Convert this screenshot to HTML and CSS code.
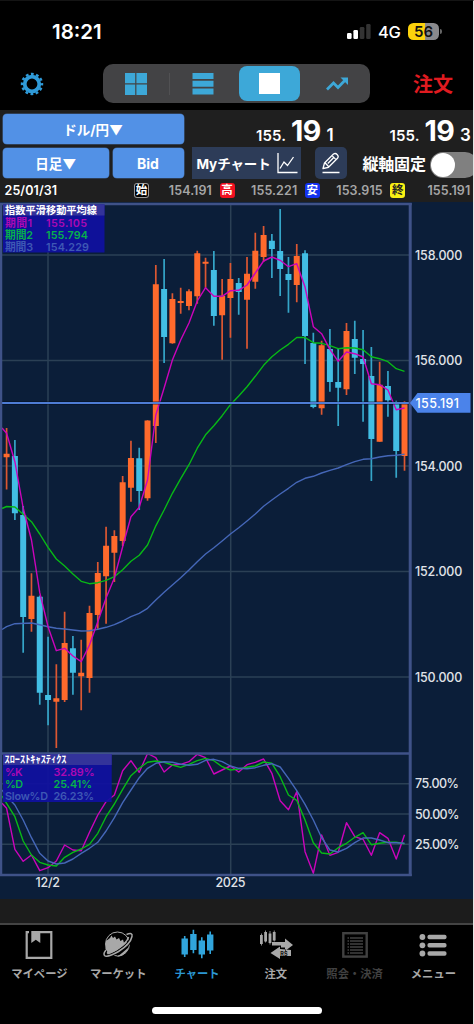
FILE: index.html
```html
<!DOCTYPE html>
<html lang="ja">
<head>
<meta charset="utf-8">
<title>チャート</title>
<link rel="stylesheet" href="styles.css">
</head>
<body>
<div class="app">
  <header class="status">
    <span class="clock">18:21</span>
    <div class="status-right">
      <svg class="signal" width="24" height="16" viewBox="0 0 24 16"><rect x="0" y="9" width="4.6" height="6" rx="1.3" fill="#fff"/><rect x="6.4" y="6" width="4.6" height="9" rx="1.3" fill="#fff"/><rect x="12.8" y="3" width="4.6" height="12" rx="1.3" fill="#333"/><rect x="19.2" y="0" width="4.4" height="15" rx="1.3" fill="#333"/></svg>
      <span class="net">4G</span>
      <span class="battery">56</span>
      <span class="battery-tip"></span>
    </div>
  </header>

  <nav class="topbar">
    <svg class="gear" width="24" height="24" viewBox="-12 -12 24 24">
      <circle r="7.300" fill="none" stroke="#2f9ad8" stroke-width="3.800"/>
      <circle r="10" fill="none" stroke="#2f9ad8" stroke-width="2.400" stroke-dasharray="2.800 2.436" stroke-dashoffset="1.400"/>
    </svg>
    <div class="segments">
      <span class="seg"><svg width="22" height="22" viewBox="0 0 22 22" fill="#3da8d8"><path d="M0 0h10.2v10.2H0zM11.4 0H22v10.2H11.4zM0 11.4h10.2V22H0zM11.4 11.4H22V22H11.4z"/></svg></span>
      <i class="divider"></i>
      <span class="seg"><svg width="22" height="22" viewBox="0 0 22 22" fill="#3da8d8"><path d="M.5 0h21v6H.5zM.5 7.8h21v6H.5zM.5 15.6h21v6H.5z"/></svg></span>
      <span class="seg seg-on"><i class="square"></i></span>
      <span class="seg"><svg width="24" height="16" viewBox="0 0 24 16"><path d="M2 13.5 8.5 7l4.5 4.5L20 4.200" fill="none" stroke="#3da8d8" stroke-width="2.7"/><path d="M15.500 1.500H23V9z" fill="#3da8d8"/></svg></span>
    </div>
    <span class="order">注文</span>
  </nav>

  <section class="controls">
    <div class="row row-pair">
      <button class="btn pair">ドル/円▼</button>
      <div class="price bid"><span class="p-int">155.</span><span class="p-big">19</span><span class="p-sub">1</span></div>
      <div class="price ask"><span class="p-int">155.</span><span class="p-big">19</span><span class="p-sub">3</span></div>
    </div>
    <div class="row row-tools">
      <button class="btn period">日足▼</button>
      <button class="btn side">Bid</button>
      <div class="mychart"><span>Myチャート</span><svg width="21" height="21" viewBox="0 0 21 21" fill="none" stroke="#fff" stroke-width="1.300"><path d="M1 0v19.500h19.500"/><path d="M3 15.500 7 9l3.500 3.500L16.500 4"/></svg></div>
      <div class="pencil"><svg width="20" height="22" viewBox="0 0 20 22" fill="none" stroke="#fff" stroke-width="1.300" stroke-linejoin="round"><path d="M2 16.500 3.500 11 12.500 2Q14.500.8 16.300 2.700 18 4.500 16.500 6.300L7.500 15.300zM11 3.600l4 4M4 10.800l3.700 4M6.800 11.500 12.500 5.800"/><path d="M1.500 20.500h17" stroke-width="1.500"/></svg></div>
      <span class="fix">縦軸固定</span>
      <span class="toggle"><i class="knob"></i></span>
    </div>
    <div class="ohlc">
      <span class="date">25/01/31</span>
      <span class="tag tag-open">始</span><span class="val">154.191</span>
      <span class="tag tag-high">高</span><span class="val">155.221</span>
      <span class="tag tag-low">安</span><span class="val">153.915</span>
      <span class="tag tag-close">終</span><span class="val">155.191</span>
    </div>
  </section>

  <svg class="chart" width="473" height="697" viewBox="0 202 473 697">
    <g class="grid">
      <path d="M48 204V875M230.700 204V875"/>
      <path d="M2 255H410M2 360.600H410M2 466H410M2 571.500H410M2 677H410M2 783.700H410M2 814H410M2 844.300H410"/>
    </g>
    <!-- x is the candle index; one unit is one trading day -->
    <g class="series" transform="translate(6.600 0) scale(8.290 1)">
      <path class="wick up" d="M0 428V489.500M3 573.300V631.700M6 664.300V748M7 611.700V702M9 639.700V710.300M10 605.700V692.700M11 562V628.700M12 526.700V623.700M13 530.300V582M14 476V546M15 440.700V501.700M17 420.300V500.700M18 265V443M20 293.300V343.700M21 287.700V313.700M22 289.300V310.300M23 250.700V303.700M24 257.700V287.700M26 279V359.700M27 263V337.700M29 257V348.700M30 232.700V288.700M31 226V262M35 244V302.300M38 340.700V414.700M41 323V395M45 361.700V441.700M48 401V470.700"/>
      <path class="wick down" d="M1 440V520M2 506V652.700M4 595.500V704.700M5 636.700V725.300M8 636V694.700M16 447.700V510M19 259V363M25 251V325.700M28 278V314.700M32 234V278M33 209V296M34 257V312.700M36 250.300V364M37 332.700V408.300M39 329V391.700M40 349V426M42 320.700V374M43 330V421.700M44 347V481M46 371V416.700M47 400.700V477.700"/>
      <path class="body up" d="M0 453.700V457.300M3 595.700V619M6 698.300V701.700M7 643V700M9 672.700V676.300M10 613V678M11 573V615M12 545.700V576.300M13 536V552.700M14 482.300V541M15 458V487.700M17 420.600V498.300M18 284.300V426M20 299V343.300M21 301V303M22 291.300V306M23 253.300V296.300M24 261.700V263.700M26 295.700V315.300M27 279V298M29 273.700V299.700M30 250.700V281.700M31 235V257M35 256V285M38 345.300V408.300M41 331V389.300M45 384.700V441.700M48 403V456"/>
      <path class="body down" d="M1 456V513.300M2 515V617M4 596.700V692.700M5 695V700M8 648.300V672.700M16 458.300V491M19 289V337M25 270V316M28 283V292M32 240.700V249M33 251V269M34 274V280M36 253.300V336M37 343V407M39 349V382M40 382V387.700M42 339V357.700M43 359V364M44 376V439M46 386V400.300M47 402.700V451"/>
      <polyline class="line slow" points="-.55,629.5 0,626.7 1,623.7 3,623 4,624.7 5,626.7 6,628.3 7,629 9,631 10,630.7 11,629.3 12,627.3 13,624.7 14,621 15,616.7 16,613.3 17,608.3 18,600 19,592.3 20,585 21,577.7 22,570 23,561.7 24,554 25,547.7 26,541 27,534 28,527.7 29,521 30,514 31,506.3 32,500 33,494 34,488.3 35,482.3 36,478.3 37,476.3 38,473 39,470.3 40,468 41,464.7 42,461.7 43,459.3 44,458.7 45,457 46,455.7 47,455.200 48,454.300"/>
      <polyline class="line mid" points="-.55,508.5 0,506.5 1,507 2,514.3 3,521.7 4,534 5,547.3 6,559 7,566 8,574 9,581.3 10,583.7 11,582.7 12,580.3 13,576.7 14,569.7 15,561.3 16,555.3 17,545 18,525.8 19,510 20,493.3 21,478.7 22,464.7 23,448.2 24,434.8 25,425.7 26,415.7 27,404.7 28,396 29,386.7 30,376.3 31,365.3 32,356.7 33,350 34,344.3 35,337.5 36,337.5 37,342.7 38,343.3 39,345.7 40,348.7 41,347.7 42,348 43,349.7 44,356.7 45,358.7 46,361.7 47,368.7 48,371.3"/>
      <polyline class="line fast" points="-.55,428 0,433.3 1,461.7 2,508 3,540 4,592.7 5,626.7 6,650.7 7,648.3 8,656 9,661.7 10,645 11,621.7 12,598 13,578 14,546.7 15,516.7 16,507.3 17,480 18,415 19,388 20,360 21,340 22,323 23,301 24,287.7 25,296.3 26,296.3 27,290.7 28,290.3 29,285 30,273 31,261 32,257 33,260.3 34,266.7 35,263.7 36,287 37,326.7 38,333.7 39,349.3 40,361.3 41,352 42,353.7 43,357 44,383.7 45,384.7 46,390 47,409.7 48,408"/>
      <polyline class="line fast" points="-.55,803.3 0,808.3 1,849.3 2,861.3 3,855 4,870.7 5,867.7 6,861 7,845 8,850 9,850.7 10,832.3 11,815 12,801.7 13,795 14,770.7 15,760.7 16,772.3 17,753.5 18,757.7 19,772 20,765 21,764.3 22,761.7 23,754.3 24,757.7 25,774 26,770 27,766 28,772 29,764.7 30,762.3 31,759 32,773.3 33,800.7 34,809.7 35,791.7 36,851.7 37,873.3 38,835 39,855.3 40,852.3 41,822.7 42,836.7 43,839.3 44,855.3 45,832.7 46,838.3 47,859 48,834.7"/>
      <polyline class="line mid" points="-.55,796 0,803.3 1,816.7 2,841 3,855 4,862.3 5,865 6,866 7,857.3 8,852.3 9,849 10,844.3 11,833.3 12,816.7 13,804 14,789.3 15,775.7 16,768.3 17,762.3 18,761 19,762.3 20,765 21,767.3 22,764.3 23,760.7 24,758.3 25,760.7 26,766.7 27,770 28,769 29,767.3 30,766 31,762 32,763.3 33,776.7 34,795 35,800.3 36,820 37,842.7 38,853 39,854 40,847.7 41,843.3 42,837.3 43,832.7 44,844.7 45,843.3 46,842.3 47,842.3 48,843.7"/>
      <polyline class="line slow" points="-.55,790 0,796 1,805 2,820 3,837.7 4,853.3 5,861 6,864 7,863 8,859 9,853.3 10,848.3 11,842.3 12,831 13,817.7 14,802.7 15,790 16,777.7 17,768.3 18,763.3 19,761.7 20,762.3 21,764.3 22,765.3 23,764.3 24,760.3 25,759.3 26,761.7 27,766 28,768.3 29,768.7 30,767.7 31,765.3 32,763.7 33,767 34,778.3 35,790.7 36,804.3 37,820 38,837.7 39,850 40,852 41,848.3 42,842.7 43,838 44,838 45,840 46,842.7 47,842.7 48,843.3"/>
    </g>

    <path class="price-shadow" d="M2 403H411"/>
    <path class="price-line" d="M2 403H411"/>
    <g class="frame">
      <path d="M1 204V875" stroke-width="2.500"/>
      <path d="M0 203.900H411.700M0 753.600H410M0 875H411.700" stroke-width="2.500"/>
      <path d="M410.200 203V876" stroke-width="3"/>
    </g>
    <path class="tag-shape" d="M410 403 417.500 393H470.500V412.800H417.500z"/>
    <text class="tag-text" x="415.500" y="408" textLength="43.500">155.191</text>

    <g class="axis">
      <text x="415" y="259.700" textLength="47.300">158.000</text>
      <text x="415" y="365.300" textLength="47.300">156.000</text>
      <text x="415" y="470.700" textLength="47.300">154.000</text>
      <text x="415" y="576.200" textLength="47.300">152.000</text>
      <text x="415" y="681.500" textLength="47.300">150.000</text>
      <text x="415" y="788.300" textLength="44">75.00%</text>
      <text x="415" y="818.700" textLength="44.500">50.00%</text>
      <text x="415" y="849" textLength="44.500">25.00%</text>
      <text x="35.500" y="886.800" textLength="24.500">12/2</text>
      <text x="215.500" y="886.800" textLength="30">2025</text>
    </g>

    <g class="legend">
      <rect x="3" y="204.500" width="101.500" height="48" fill="#1010a0"/>
      <rect x="3" y="204.500" width="101.500" height="11" fill="#36369a"/>
      <text class="title" x="5" y="213.500" textLength="92">指数平滑移動平均線</text>
      <text class="c1" x="5" y="226.500" textLength="27">期間1</text><text class="c1" x="46" y="226.500" textLength="41">155.105</text>
      <text class="c2" x="5" y="238.600" textLength="28">期間2</text><text class="c2" x="46" y="238.600" textLength="42">155.794</text>
      <text class="c3" x="5" y="250.600" textLength="28">期間3</text><text class="c3" x="46" y="250.600" textLength="43">154.229</text>
    </g>
    <g class="legend">
      <rect x="3" y="754" width="108.700" height="48" fill="#1010a0"/>
      <rect x="3" y="754" width="108.700" height="11" fill="#36369a"/>
      <text class="title" x="4.500" y="762.800" textLength="62" lengthAdjust="spacingAndGlyphs">ｽﾛｰｽﾄｷｬｽﾃｨｸｽ</text>
      <text class="c1" x="5" y="775.900" textLength="17.500">%K</text><text class="c1" x="53.500" y="775.900" textLength="41">32.89%</text>
      <text class="c2" x="5" y="788.100" textLength="18">%D</text><text class="c2" x="53.500" y="788.100" textLength="38.500">25.41%</text>
      <text class="c3" x="5" y="800" textLength="43">Slow%D</text><text class="c3" x="53.500" y="800" textLength="40.500">26.23%</text>
    </g>
  </svg>

  <div class="spacer"></div>

  <footer class="tabs">
    <a class="tab"><svg width="30" height="32" viewBox="0 0 30 32"><path d="M5 2.700H2.700V28.300H27.300V2.700H16" transform="translate(0 .5)" fill="none" stroke="#a8a8a8" stroke-width="2.200"/><path d="M7.300 2h9v12l-4.500-3.300L7.300 14z" fill="#a8a8a8"/></svg><span>マイページ</span></a>
    <a class="tab"><svg width="32" height="32" viewBox="0 0 32 32"><circle cx="15.500" cy="15" r="12" fill="none" stroke="#a8a8a8" stroke-width="1"/><path d="M3.500 20 4 12l4-3 1.500-2.500L11 9l2-1.500 1.500 3L17 9l1.500 3L21 10.500l1 3.500 3-1.500v5q-6 5-12 7.500l-7 1.500zM15 28q9-1 12-10l-7 6z" fill="#a8a8a8"/><path d="M24.500 5.500Q31 3 30 7.500 28.500 15 16.500 22.500 5 29 2.500 26.500 1 24.500 4 21" fill="none" stroke="#000" stroke-width="3.600"/><path d="M24.500 5.500Q31 3 30 7.500 28.500 15 16.500 22.500 5 29 2.500 26.500 1 24.500 4 21M26.500 8Q25 14 15 20 7 24.500 5 23.500" fill="none" stroke="#a8a8a8" stroke-width="1.500"/></svg><span>マーケット</span></a>
    <a class="tab tab-on"><svg width="34" height="32" viewBox="0 0 34 32" fill="#31a5dc"><path d="M1.500 9.500h6.400v16H1.500zM10.200 5h6.400v16h-6.400zM18.600 11.500H25v14h-6.400zM27 5.500h6.400v16H27z"/><path d="M3.900 7h1.600v21H3.900zM12.600.8h1.600v23.500h-1.600zM21 8.300h1.600v21H21zM29.400 2.500H31V25h-1.600z"/></svg><span>チャート</span></a>
    <a class="tab"><svg width="36" height="32" viewBox="0 0 36 32" fill="#a8a8a8"><path d="M2 6h2.800v9H2zM6.200 3H9v9.500H6.200zM10.600 4.500h2.800V14h-2.800zM14.800 3h2.800v8.500h-2.800z"/><path d="M3 4.500h.8v12H3zM7.200 1.500H8v12h-.8zM11.600 2h.8v13.500h-.8zM15.800 1.500h.8v11h-.8zM14 13h13V9.500l8 6.500-8 6v-3.500h-4v-2h-9zM22 20v-2.500L12.500 24l9.500 6v-3h11v-6z"/><text x="22.300" y="26.600" class="rs">RS</text></svg><span>注文</span></a>
    <a class="tab tab-off"><svg width="26" height="32" viewBox="0 0 26 32"><rect x="1.300" y="4.200" width="23.400" height="23.400" fill="none" stroke="#414141" stroke-width="2.400"/><path d="M8 9h13M8 12h13M8 15h13M8 18h13M8 21h13M8 24h13" stroke="#414141" stroke-width="1.500"/><path d="M5.500 9H7M5.500 12H7M5.500 15H7M5.500 18H7M5.500 21H7M5.500 24H7" stroke="#414141" stroke-width="1.300"/></svg><span>照会・決済</span></a>
    <a class="tab"><svg width="28" height="32" viewBox="0 0 28 32" fill="#a8a8a8"><circle cx="3.400" cy="8" r="2.900"/><circle cx="3.400" cy="16.300" r="2.900"/><circle cx="3.400" cy="24.500" r="2.900"/><rect x="8.500" y="5.700" width="19" height="4.600" rx="1.800"/><rect x="8.500" y="14" width="19" height="4.600" rx="1.800"/><rect x="8.500" y="22.200" width="19" height="4.600" rx="1.800"/></svg><span>メニュー</span></a>
  </footer>
  <div class="home"><i></i></div>
</div>
</body>
</html>
```
FILE: styles.css
```css
* { box-sizing: border-box; }
body { margin: 0; background: #000; font-family: Inter, "Noto Sans CJK JP", sans-serif; color: #fff; }
.app { width: 474px; height: 1024px; display: flex; flex-direction: column; overflow: hidden; border-right: 1px solid #e6e6e6; border-top: 1px solid #141414; }
svg { display: block; flex: none; }
span { white-space: nowrap; }

.status { height: 56px; padding: 5px 31px 0 52px; display: flex; align-items: center; justify-content: space-between; flex: none; }
.clock { font-size: 20.500px; font-weight: 600; letter-spacing: 0; }
.status-right { display: flex; align-items: center; }
.signal { margin-right: 7px; }
.net { font-size: 16.500px; font-weight: 500; width: 24px; letter-spacing: -.3px; }
.battery { margin-left: 6px; width: 31px; height: 17px; border-radius: 5.500px; background: linear-gradient(90deg, #fcd20c 56%, #8a8a8d 56%); color: #111; font-size: 15px; font-weight: 600; line-height: 17px; text-align: center; }
.battery-tip { width: 2px; height: 5px; margin-left: 1px; border-radius: 0 2px 2px 0; background: #666; }

.topbar { height: 53px; display: flex; align-items: center; padding: 0 20px 0 19.500px; flex: none; }
.gear { margin-right: 59.500px; }
.segments { width: 267px; height: 39px; border-radius: 10px; background: #434345; display: flex; align-items: center; padding: 0 3px 0 2px; margin-right: 43px; flex: none; }
.seg { width: 61px; height: 35px; border-radius: 8px; display: flex; align-items: center; justify-content: center; flex: none; }
.divider { width: 1px; height: 22px; margin: 0 2px 0 3px; background: #515153; flex: none; }
.segments .seg:nth-of-type(2) { margin-left: 0; }
.segments .seg:nth-of-type(3) { margin-left: 6px; }
.segments .seg:nth-of-type(4) { margin-left: 6px; }
.seg-on { background: #3da8d8; }
.square { width: 21px; height: 21px; background: #fff; }
.order { color: #e01b20; font-size: 20px; font-weight: 700; }

.controls { height: 92px; background: #1f1f1f; padding: 4px 0 0 3px; display: flex; flex-direction: column; flex: none; }
.row { display: flex; flex: none; }
.row > * { flex: none; }
.btn { border: 0; padding: 0; border-radius: 4px; background: #5291e6; color: #fff; font: 700 13.500px Inter, "Noto Sans CJK JP", sans-serif; height: 30px; box-shadow: 0 0 0 .6px #3e5f8c; }
.row-pair { height: 33.500px; }
.pair { width: 180.500px; }
.price { display: flex; align-items: baseline; font-weight: 600; line-height: 34px; height: 33px; }
.p-int { font-size: 15px; width: 35px; letter-spacing: .1px; }
.p-big { font-size: 28.500px; width: 35.500px; font-weight: 700; letter-spacing: -.5px; }
.p-sub { font-size: 17px; }
.bid { margin-left: 72.500px; width: 133.500px; }
.row-tools { height: 31px; align-items: center; }
.period { width: 105.500px; }
.side { width: 71px; margin-left: 4px; font-size: 14px; }
.mychart { width: 109.500px; height: 32px; margin-left: 8px; background: #2d3c58; display: flex; align-items: center; justify-content: space-between; padding: 0 3px 0 5px; font-size: 13.500px; font-weight: 700; }
.mychart span { letter-spacing: -.1px; }
.pencil { width: 31.500px; height: 31.500px; margin-left: 14px; border-radius: 5px; background: #2d3c58; display: flex; align-items: center; justify-content: center; }
.fix { width: 67px; margin-left: 16px; font-size: 16px; font-weight: 700; letter-spacing: -.2px; }
.toggle { width: 48px; height: 26px; border-radius: 13px; background: #808080; padding: 1px; margin-top: 4px; }
.knob { display: block; width: 24px; height: 24px; border-radius: 50%; background: #fff; }

.ohlc { flex: 1; display: grid; grid-template-columns: 129.500px 15px 70.500px 15px 70.300px 15px 70.500px 15px 67px; align-items: center; font-size: 12.500px; font-weight: 600; padding-left: 1.500px; }
.date { letter-spacing: .1px; }
.val { text-align: right; color: #a6a6a6; padding-right: 7.500px; letter-spacing: .1px; }
.val:last-child { padding-right: 2px; }
.tag { width: 15px; height: 15px; border-radius: 3px; font-size: 11.500px; line-height: 14px; text-align: center; font-weight: 700; }
.tag-open { background: #000; box-shadow: inset 0 0 0 1px #999; }
.tag-high { background: #f01020; }
.tag-low { background: #1432f0; }
.tag-close { background: #f8f014; color: #222; }

.chart { background: #0b1e39; }
.grid path { stroke: #2b4055; stroke-width: 1.500; }
.frame path, .grid path { fill: none; }
.frame path { stroke: #3f5288; }
.series path, .series polyline { fill: none; vector-effect: non-scaling-stroke; }
.wick { stroke-width: 1.700; }
.body { stroke-width: 6; }
.wick.up { stroke: #dc5732; }
.wick.down { stroke: #35a5c8; }
.body.up { stroke: #ff6a2c; }
.body.down { stroke: #42bee4; }
.line { stroke-width: 1.400; stroke-linejoin: round; }
.fast { stroke: #cb04bb; }
.mid { stroke: #08b916; }
.slow { stroke: #4567b8; }
.price-shadow { stroke: #030a18; stroke-width: 3.400; opacity: .45; }
.price-line { stroke: #4e7cd4; stroke-width: 2; }
.tag-shape { fill: #4b83ea; }
.chart text { font-family: Inter, "Noto Sans CJK JP", sans-serif; }
.tag-text { font-size: 12.500px; font-weight: 500; fill: #fff; }
.axis text { font-size: 12.500px; font-weight: 500; fill: #e0e3e8; }
.legend rect { opacity: .93; }
.legend text { font-size: 10.800px; font-weight: 600; }
.legend .title { font-size: 10.200px; fill: #fff; }
.legend .c1 { fill: #ab08b4; }
.legend .c2 { fill: #06b04c; }
.legend .c3 { fill: #3e58b4; }

.spacer { flex: none; height: 24px; background: #1c1c1c; }
.tabs { flex: none; height: 67px; border-top: 2px solid #444; display: grid; grid-template-columns: repeat(6, 78.800px); padding-top: 4px; }
.tab { display: flex; flex-direction: column; align-items: center; color: #a8a8a8; font-size: 11.300px; font-weight: 700; }
.tab span { margin-top: 5px; line-height: 17px; }
.tab-on { color: #2b96d2; }
.tab-off { color: #414141; }
.rs { font: 700 5.500px Inter, sans-serif; fill: #111; }
.home { display: flex; justify-content: center; padding-top: 17px; }
.home i { width: 170px; height: 6.500px; border-radius: 4px; background: #fff; }
```
